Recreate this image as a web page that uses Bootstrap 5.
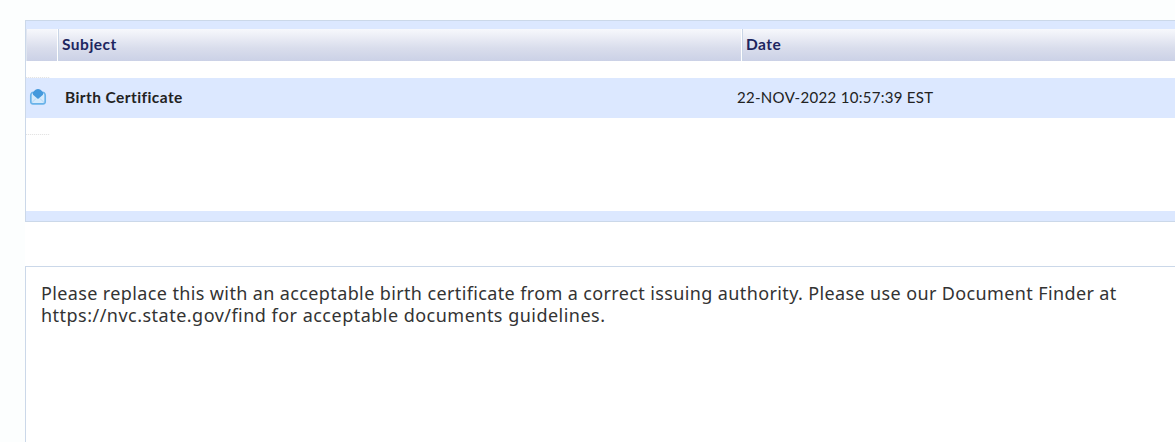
<!DOCTYPE html>
<html lang="en">
<head>
<meta charset="utf-8">
<meta name="viewport" content="width=device-width, initial-scale=1">
<title>Messages</title>
<link rel="stylesheet" href="https://cdn.jsdelivr.net/npm/bootstrap@5.3.0/dist/css/bootstrap.min.css">
<style>
body { background: #fcfefe; height: 442px; font-family: Lato, sans-serif; color: #222; }
.page-area { margin-left: 25px; padding-top: 20px; height: 442px; background: linear-gradient(#fcfefe 20px, #fff 20px); }
.inbox { height: 202px; border: 1px solid #cbd8e9; border-right: 0; background: #dce8ff; padding: 8px 0 10px; }
.inbox-head { height: 32px; background: linear-gradient(#f7f8fc, #d9ddec 60%, #cbd1e6); color: #1d2660; font-weight: 700; font-size: 15.5px; letter-spacing: .5px; }
.inbox-head > div { line-height: 31px; padding-left: 3px; border-left: 1px solid #c9d5e6; }
.inbox-head > div + div { box-shadow: -1px 0 0 #fff; }
.inbox-head .head-icon { width: 32px; border-left-color: #dfe5f0; }
.head-subject { width: 684px; }
.inbox-body { height: 150px; padding-top: 16px; }
.dots { width: 24px; height: 1px; background: repeating-linear-gradient(90deg, #e4e4e4 0 1px, #fafafa 1px 2px); }
.message-row { height: 40px; background: #dce8ff; font-size: 15px; line-height: 38px; margin-bottom: 16px; padding-bottom: 2px; }
.row-icon { width: 39px; padding-left: 3px; }
.row-subject { width: 672px; font-weight: 700; font-size: 15.5px; letter-spacing: .42px; }
.row-date { letter-spacing: .3px; }
.reader { margin-top: 44px; height: 176px; border: 1px solid #cbd8e9; border-width: 1px 0 0 1px; padding: 15px 0 0 15px; font: 18px/22px "Noto Sans", sans-serif; color: #333; }
.line-one { letter-spacing: .376px; }
.line-two { letter-spacing: .48px; }
</style>
<script src="https://cdn.jsdelivr.net/npm/bootstrap@5.3.0/dist/js/bootstrap.bundle.min.js"></script>
</head>
<body class="overflow-hidden">
<main class="page-area">
  <section class="inbox">
    <div class="inbox-head d-flex">
      <div class="head-icon"></div>
      <div class="head-subject">Subject</div>
      <div class="flex-grow-1">Date</div>
    </div>
    <div class="inbox-body bg-white">
      <div class="dots"></div>
      <div class="message-row d-flex align-items-center">
        <div class="row-icon d-flex">
          <svg width="18" height="18" viewBox="0 0 18 18" fill="none">
            <path d="M4 4.2 2.8 5Q1.8 6 1.8 7.2V13.5Q1.8 15.8 4 15.8H14Q16.2 15.8 16.2 13.5V7.2Q16.2 6 15.2 5L14 4.2" fill="#d5eafc" stroke="#68b2e9" stroke-width="1.7"/>
            <path d="M3 14.5 7 10.5M15 14.5 11 10.5" stroke="#b3d7f5"/>
            <path d="M4 4 6.5 1.7Q9 .5 11.5 1.7L14 4V6.8L9 11 4 6.8Z" fill="#4499dc"/>
          </svg>
        </div>
        <div class="row-subject">Birth Certificate</div>
        <div class="row-date">22-NOV-2022 10:57:39 EST</div>
      </div>
      <div class="dots"></div>
    </div>
  </section>
  <section class="reader">
    <div class="text-nowrap line-one">Please replace this with an acceptable birth certificate from a correct issuing authority. Please use our Document Finder at</div>
    <div class="text-nowrap line-two">https://nvc.state.gov/find for acceptable documents guidelines.</div>
  </section>
</main>
</body>
</html>
